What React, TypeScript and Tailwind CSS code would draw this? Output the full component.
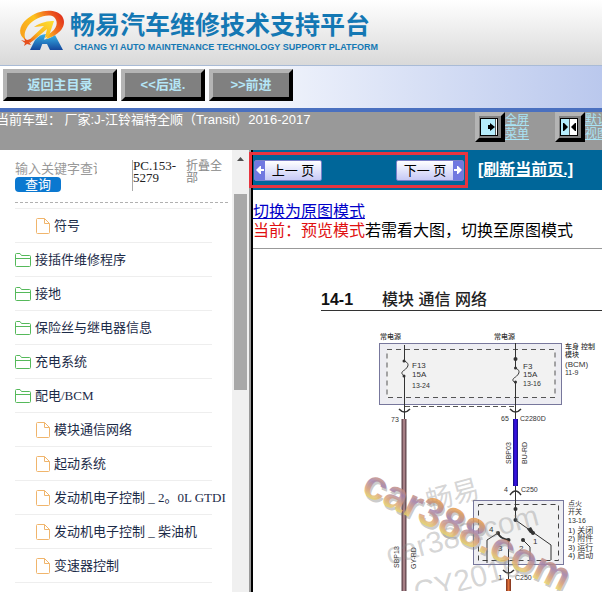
import React from "react";

const CJK = "font-['Liberation_Sans','Noto_Sans_CJK_SC',sans-serif]";

function Logo() {
  return (
    <svg viewBox="0 0 64 54" className="h-[54px] w-16 shrink-0" aria-hidden="true">
      <defs>
        <linearGradient id="flame" x1="0" y1="0.6" x2="1" y2="0.2">
          <stop offset="0" stopColor="#f9a51c" />
          <stop offset="0.4" stopColor="#fdc41e" />
          <stop offset="0.7" stopColor="#f26a1e" />
          <stop offset="1" stopColor="#df2c1b" />
        </linearGradient>
        <linearGradient id="bolt" x1="0" y1="1" x2="1" y2="0">
          <stop offset="0" stopColor="#e6501d" />
          <stop offset="0.4" stopColor="#fbb51c" />
          <stop offset="1" stopColor="#fde032" />
        </linearGradient>
        <linearGradient id="leg" x1="0" y1="0" x2="0" y2="1">
          <stop offset="0" stopColor="#35b0e6" />
          <stop offset="1" stopColor="#14479c" />
        </linearGradient>
      </defs>
      <path d="M16 46 L21 36 Q26 30 32 30 L26 46 Z" fill="url(#leg)" />
      <path d="M28 36 Q36 35 41 31 L49 46 L36 46 L33 40 L28 40 Z" fill="url(#leg)" />
      <path
        d="M12 36 C4 32 4 22 13 15 C24 5 42 4 48 12 C54 21 46 31 32 35 L35 30 C43 25 45 18 40 13 C34 9 20 14 14 22 C10 28 10 32 12 36 Z"
        fill="url(#flame)"
      />
      <path d="M14 37 L30 22 L20 23 C27 18 34 17 40 17 L35 32 L31 34 L33 25 L20 36 L16 39 Z" fill="url(#bolt)" />
      <path d="M10 34 L13 36 L17 35 L15 38 L17 41 L13 40 L10 42 L11 39 L7 36 L11 37 Z" fill="#e6501d" />
    </svg>
  );
}

function BevelButton({ children, className }: { children: React.ReactNode; className: string }) {
  return (
    <button
      type="button"
      className={`h-8 shrink-0 border-4 border-t-[#b4b4b4] border-l-[#b4b4b4] border-r-black border-b-black bg-[#808080] text-[13px] leading-6 font-bold whitespace-nowrap text-[#b5e6f7] ${className}`}
    >
      {children}
    </button>
  );
}

function ViewTool({ split, lines }: { split?: boolean; lines: [string, string] }) {
  return (
    <div className="flex w-20 shrink-0 items-start">
      <button
        type="button"
        aria-label={lines.join("")}
        className="size-[30px] shrink-0 border-4 border-t-[#b4b4b4] border-l-[#b4b4b4] border-r-black border-b-black bg-[#808080]"
      >
        <svg viewBox="0 0 22 22" className="size-[22px]" aria-hidden="true">
          <rect x="1.5" y="2.5" width="17" height="17" fill={split ? "#fff" : "#b5ecfb"} stroke="#000" />
          {split ? (
            <>
              <path d="M2 3h8v16H2z" fill="#b5ecfb" />
              <path d="M10.5 3v16" stroke="#555" />
              <path d="M4 7h1l4 4-4 4H4zM17 7h-1l-4 4 4 4h1z" fill="#000" />
            </>
          ) : (
            <>
              <path d="M16 3h2v16h-2z" fill="#fff" />
              <path d="M16.5 3v16" stroke="#555" />
              <path d="M9 9h2V7l5 4-5 4v-2H9z" fill="#000" />
            </>
          )}
        </svg>
      </button>
      <a href="#" className="shrink-0 pt-px text-[12px] leading-[14px] whitespace-nowrap text-[#a9e4f5] underline">
        {lines[0]}
        <br />
        {lines[1]}
      </a>
    </div>
  );
}

function FolderIcon() {
  return (
    <svg viewBox="0 0 16 14" className="h-3.5 w-4 shrink-0" fill="none" stroke="#55b95a" aria-hidden="true">
      <path d="M.5 12.5V1.5Q.5.5 1.5.5H5L6.5 2.5H14.5Q15.5 2.5 15.5 3.5V12.5Q15.5 13.5 14.5 13.5H1.5Q.5 13.5.5 12.5ZM.5 5.5H15.5" />
    </svg>
  );
}

function FileIcon() {
  return (
    <svg viewBox="0 0 14 16" className="h-4 w-3.5 shrink-0" fill="none" stroke="#f0b56c" aria-hidden="true">
      <path d="M1.5.5H8.5L13.5 5.5V14.5Q13.5 15.5 12.5 15.5H1.5Q.5 15.5.5 14.5V1.5Q.5.5 1.5.5ZM8.5.5V5.5H13.5" />
    </svg>
  );
}

const tree: { label: string; file?: boolean }[] = [
  { label: "符号", file: true },
  { label: "接插件维修程序" },
  { label: "接地" },
  { label: "保险丝与继电器信息" },
  { label: "充电系统" },
  { label: "配电/BCM" },
  { label: "模块通信网络", file: true },
  { label: "起动系统", file: true },
  { label: "发动机电子控制 _ 2。0L GTDI", file: true },
  { label: "发动机电子控制 _ 柴油机", file: true },
  { label: "变速器控制", file: true },
];

function Sidebar() {
  return (
    <aside className="flex w-[249px] shrink-0 bg-white font-['Liberation_Serif','Noto_Sans_CJK_SC',serif]">
      <div className="min-w-0 flex-1 overflow-hidden pt-2.5 pl-[15px]">
        <div className="mr-1 flex h-[43px] items-start border-b border-dashed border-[#b0b0b0]">
          <div className="w-[117px] shrink-0">
            <input
              aria-label="输入关键字查询"
              placeholder="输入关键字查询"
              className="block h-[17px] w-[82px] text-[13px] leading-[17px] outline-none placeholder:text-[#999]"
            />
            <button type="button" className="block h-[15px] w-[46px] rounded bg-[#0b78d0] text-[13px] leading-[15px] text-white">
              查询
            </button>
          </div>
          <div className="h-[31px] w-[54px] shrink-0 border-l border-[#aaa] text-[13px] leading-3 text-[#222]">
            PC.153-
            <br />
            5279
          </div>
          <a href="#" className="text-[12px] leading-3 text-[#888]">
            折叠全
            <br />
            部
          </a>
        </div>
        <ul className="mt-[5px] mr-5 border-t border-[#eee]">
          {tree.map((n) => (
            <li key={n.label} className="h-[34px] border-b border-[#eee]">
              <a
                href="#"
                className={`flex h-full items-center gap-1 text-[13px] whitespace-nowrap text-[#1c2b48] ${n.file ? "pl-[21px]" : ""}`}
              >
                {n.file ? <FileIcon /> : <FolderIcon />}
                <span>{n.label}</span>
              </a>
            </li>
          ))}
        </ul>
      </div>
      <div className="flex w-[17px] shrink-0 flex-col items-center bg-[#f0f0f0]">
        <svg viewBox="0 0 17 44" className="h-11 w-[17px]" aria-hidden="true">
          <path d="M5 11L8.500 7L12 11Z" fill="#505050" />
        </svg>
        <div className="h-[196px] w-[13px] bg-[#a8a8a8]" />
      </div>
    </aside>
  );
}

function PageButton({ label, next }: { label: string; next?: boolean }) {
  const arrow = (
    <span className="flex w-2.5 items-center justify-center bg-[#7078e0]">
      <svg viewBox="0 0 8 8" className="size-2" aria-hidden="true">
        <path d={next ? "M0 3H3V0H4L8 4L4 8H3V5H0Z" : "M8 3H5V0H4L0 4L4 8H5V5H8Z"} fill="#fff" />
      </svg>
    </span>
  );
  return (
    <button
      type="button"
      className="flex h-[21px] w-[68px] shrink-0 items-stretch rounded-xs border border-[#7a80c8] bg-linear-to-b from-white to-[#c6c9f5] text-[13px] leading-[19px] text-black"
    >
      {!next && arrow}
      <span className="flex-1 text-center whitespace-nowrap">{label}</span>
      {next && arrow}
    </button>
  );
}

function Diagram() {
  return (
    <svg
      viewBox="253 250 349 342"
      className="h-[342px] w-[349px] font-['Liberation_Sans','Noto_Sans_CJK_SC',sans-serif]"
      fill="#333"
      fontSize="8"
      role="img"
      aria-label="14-1 模块 通信 网络"
    >
      <defs>
        <linearGradient id="mark" x1="0" y1="0" x2="0" y2="1">
          <stop offset="0.2" stopColor="#e8a04c" />
          <stop offset="0.45" stopColor="#a583ac" />
          <stop offset="0.65" stopColor="#dba27c" />
          <stop offset="0.85" stopColor="#f0e468" />
        </linearGradient>
      </defs>
      <text x="321" y="306" fontSize="16" fontWeight="bold" fill="#111">14-1</text>
      <text x="382" y="306" fontSize="16" fontWeight="500" fill="#222">模块 通信 网络</text>
      <path d="M321 311.500H602" stroke="#333" />

      <g fontWeight="500">
        <text x="380" y="340" fontSize="7">常电源</text>
        <text x="494" y="340" fontSize="7">常电源</text>
      </g>
      <rect x="379.500" y="344.500" width="182" height="61" fill="#ededf2" stroke="#77779c" />
      <rect x="387" y="350.500" width="168" height="48" fill="#f2f2f2" stroke="#555" strokeDasharray="5 4" />
      <path d="M405 407.500H514" stroke="#555" strokeDasharray="5 3" />
      <g fill="none" stroke="#333">
        <path d="M404.500 346V362C411 365 407 369 404.500 371C401 373 401 375 404.500 377V420" />
        <path d="M515.500 344V369C522 372 518 376 515.500 378C512 380 512 382 515.500 384V420" />
        <path d="M399 410Q404.500 416 410 410M510 410Q515.500 416 521 410" strokeWidth="1.500" />
      </g>
      <g>
        <circle cx="404" cy="362" r="1.500" /><circle cx="404" cy="377" r="1.500" />
        <circle cx="515.500" cy="360" r="2" /><circle cx="515.500" cy="369" r="1.500" /><circle cx="515.500" cy="383" r="1.500" />
        <text x="412" y="369">F13</text><text x="412" y="378">15A</text><text x="412" y="389" fontSize="7">13-24</text>
        <text x="523" y="370">F3</text><text x="523" y="378">15A</text><text x="523" y="387" fontSize="7">13-16</text>
        <text x="391" y="423" fontSize="7">73</text>
        <text x="501" y="422" fontSize="7">65</text><text x="520" y="422" fontSize="7">C2280D</text>
        <text x="565" y="350" fontSize="7" fontWeight="500">车身 控制</text><text x="565" y="358" fontSize="7" fontWeight="500">模块</text>
        <text x="565" y="368">(BCM)</text><text x="565" y="376" fontSize="7">11-9</text>
      </g>

      <path d="M404 420V592" stroke="#60464c" strokeWidth="5" />
      <path d="M404 420V592" stroke="#a67f85" strokeWidth="2.500" />
      <path d="M515.500 420V487" stroke="#17108e" strokeWidth="5" />
      <path d="M515.500 420V487" stroke="#3710e0" strokeWidth="2.500" />
      <text transform="translate(511 465) rotate(-90)" fontSize="7">SBP03</text>
      <text transform="translate(527 465) rotate(-90)" fontSize="7">BU-RD</text>
      <text transform="translate(399 569) rotate(-90)" fontSize="7">SBP13</text>
      <text transform="translate(416 570) rotate(-90)" fontSize="7">GY-RD</text>

      <text x="504" y="493" fontSize="7">4</text><text x="521" y="493" fontSize="7">C250</text>
      <rect x="473.500" y="501.500" width="90" height="64" fill="#eeeef2" stroke="#77779c" />
      <rect x="478.500" y="505.500" width="80" height="56" fill="#f2f2f2" stroke="#444" strokeDasharray="5 4" />
      <g fill="none" stroke="#333">
        <path d="M515.500 487V521L551 546V561M487 564V541L498 534M508.500 541V581M523 541L530 548V561" />
        <path d="M510 496Q515.500 488 521 496M503 571Q508.500 577 514 571" strokeWidth="1.500" />
        <path d="M498 534Q500 540 509 541" strokeWidth="2" />
      </g>
      <circle cx="515.500" cy="510" r="2" /><circle cx="515.500" cy="521" r="2" />
      <path d="M527 530L531 528L535 535L530 534Z" /><circle cx="533" cy="534" r="2" />
      <circle cx="498" cy="534" r="2" /><circle cx="508.500" cy="541" r="2" /><circle cx="523" cy="541" r="2" />
      <text x="533" y="545">1</text><text x="519" y="552">2</text><text x="498" y="552">3</text><text x="489" y="533">4</text>
      <text x="498" y="581">1</text><text x="515" y="581" fontSize="7">C250</text>
      <path d="M508.500 580V592" stroke="#8e3d22" strokeWidth="5" />
      <path d="M508.500 580V592" stroke="#e0723c" strokeWidth="2" />
      <text x="568" y="507" fontSize="7">点火</text><text x="568" y="515" fontSize="7">开关</text><text x="568" y="524" fontSize="7">13-16</text>
      <text x="568" y="534">1) 关闭</text><text x="568" y="542">2) 附件</text><text x="568" y="551">3) 运行</text><text x="568" y="559">4) 启动</text>

      <g fill="#888" fillOpacity="0.35">
        <text transform="translate(429 512) rotate(-15)" fontSize="27">畅易</text>
        <text transform="translate(389 566) rotate(-15)" fontSize="30">car388.com</text>
        <text transform="translate(417 604) rotate(-15)" fontSize="30">CY2016</text>
      </g>
      <g transform="translate(360 494) rotate(26)" fontSize="41" fontWeight="bold">
        <text x="2" y="2" fill="#777" fillOpacity="0.4">car388.com</text>
        <text fill="url(#mark)" fillOpacity="0.85">car388.com</text>
      </g>
    </svg>
  );
}

export default function App() {
  return (
    <div className={`flex h-screen flex-col overflow-hidden bg-white ${CJK}`}>
      <header className="flex h-[65px] shrink-0 items-start bg-linear-to-b from-white to-[#d9d9d9] pt-1 pl-3.5">
        <Logo />
        <div className="-ml-2 pt-1.5 whitespace-nowrap text-[#1478b4]">
          <h1 className="text-[25px] leading-[30px] font-bold">畅易汽车维修技术支持平台</h1>
          <p className="pt-px pl-1 text-[9px] leading-3 font-bold">
            CHANG YI AUTO MAINTENANCE TECHNOLOGY SUPPORT PLATFORM
          </p>
        </div>
      </header>

      <nav className="flex h-[47px] shrink-0 items-start gap-1 border-t border-b-4 border-t-[#a9bbd6] border-b-[#4a70bf] bg-linear-to-r from-white from-30% to-[#bac8ed] pt-[3px] pl-[3px]">
        <BevelButton className="w-[114px]">返回主目录</BevelButton>
        <BevelButton className="w-[84px]">&lt;&lt;后退.</BevelButton>
        <BevelButton className="w-[84px]">&gt;&gt;前进</BevelButton>
      </nav>

      <div className="flex h-[38px] shrink-0 justify-between bg-[#999]">
        <p className="-ml-1 text-[13px] leading-4 whitespace-nowrap text-white">
          当前车型： 厂家:J-江铃福特全顺（Transit）2016-2017
        </p>
        <div className="-mr-[33px] flex shrink-0">
          <ViewTool lines={["全屏", "菜单"]} />
          <ViewTool split lines={["默认", "视图"]} />
        </div>
      </div>

      <div className="flex min-h-0 flex-1">
        <Sidebar />
        <div className="w-0.5 shrink-0 bg-[#999]" />
        <main className="relative min-w-0 flex-1 border-l-2 border-black">
          <div className="flex h-10 items-center bg-[#069] pl-px">
            <PageButton label="上一 页" />
            <div className="w-[74px] shrink-0" />
            <PageButton label="下一 页" next />
            <a href="#" className="ml-3.5 text-[16px] font-bold whitespace-nowrap text-white underline">
              [刷新当前页.]
            </a>
          </div>
          <div className="pointer-events-none absolute top-0.5 -left-1 h-9 w-[219px] border-3 border-[#e7343f]" />
          <div className="h-[59px] border-b border-[#999] pt-3 text-[16px] leading-[19px] whitespace-nowrap">
            <a href="#" className="text-[#0000c8] underline">切换为原图模式</a>
            <p className="text-black">
              <span className="text-[#e01010]">当前：预览模式</span>若需看大图，切换至原图模式
            </p>
          </div>
          <Diagram />
        </main>
      </div>
    </div>
  );
}
